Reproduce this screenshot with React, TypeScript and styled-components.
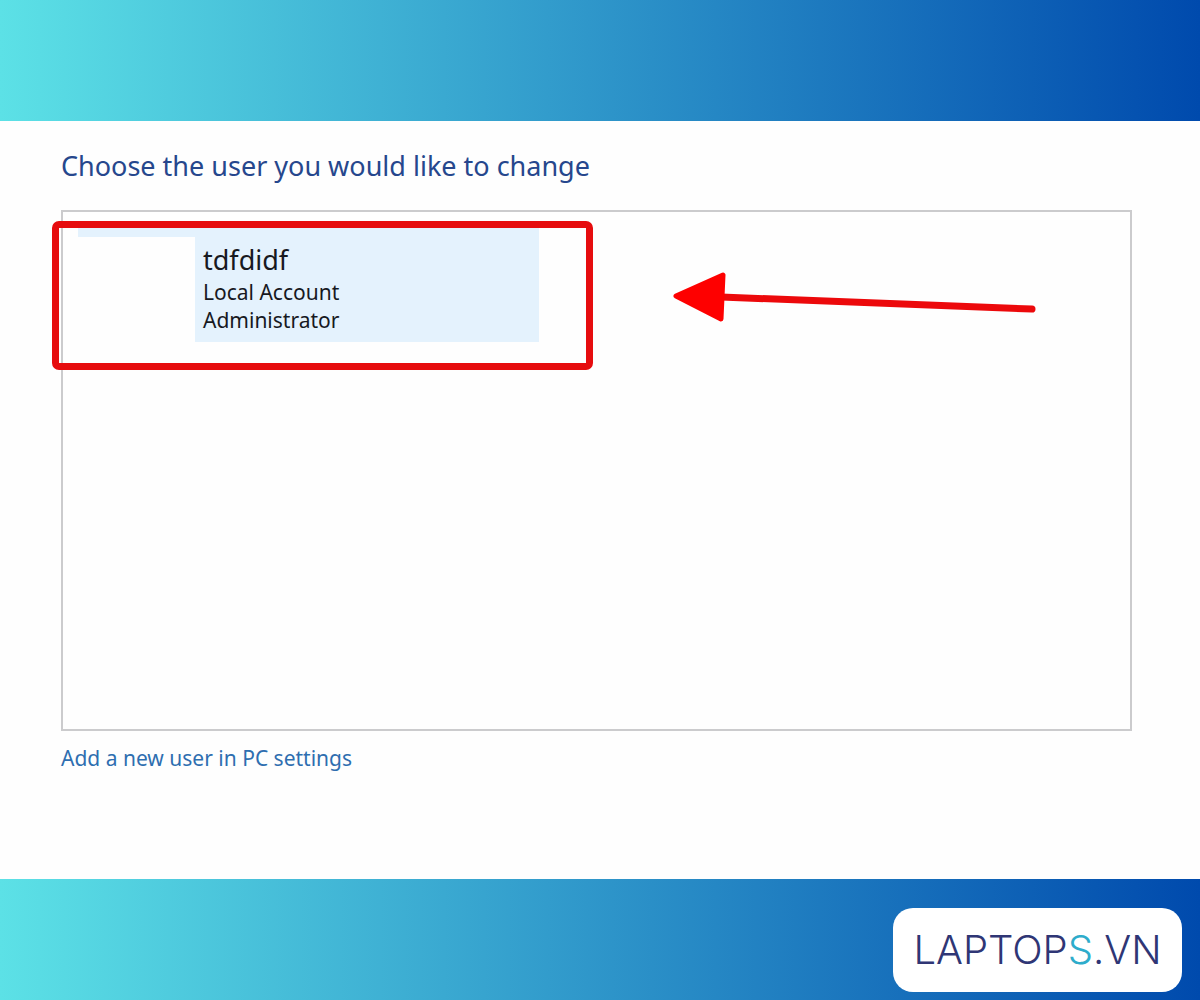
import React from "react";
import styled, { createGlobalStyle } from "styled-components";

const GlobalStyle = createGlobalStyle`
  * { box-sizing: border-box; }
  body { margin: 0; background: #fefefe; }
`;

const Page = styled.div`
  display: flex;
  flex-direction: column;
  min-height: 100vh;
  font-family: "Noto Sans", "Open Sans", sans-serif;
`;

const Band = styled.div`
  display: flex;
  justify-content: flex-end;
  align-items: flex-end;
  min-height: 121px;
  padding: 8px 18px;
  background: linear-gradient(to right, #5ce1e6, #004aad);
`;

const Main = styled.main`
  flex: 1;
  display: flex;
  flex-direction: column;
  align-items: flex-start;
  padding: 25px 68px 107px 61px;
`;

const Heading = styled.h1`
  margin: 0 0 24px;
  font-size: 27px;
  line-height: 40px;
  font-weight: 400;
  color: #26478d;
`;

const UserPanel = styled.section`
  position: relative;
  flex: 1;
  align-self: stretch;
  padding: 16px 15px;
  border: 2px solid #cbcbcd;
`;

const UserTile = styled.button`
  display: flex;
  width: 461px;
  max-width: 100%;
  padding: 9px 0 0;
  border: 0;
  background: #e4f2fd;
  color: #17191f;
  font-family: inherit;
  text-align: left;
`;

const Avatar = styled.span`
  flex: 0 0 117px;
  align-self: stretch;
  background: #fefefe;
`;

const Details = styled.span`
  display: flex;
  flex-direction: column;
  padding: 5px 8px 8px;
`;

const UserName = styled.span`
  font-size: 27px;
  line-height: 36px;
`;

const UserInfo = styled.span`
  font-size: 21px;
  line-height: 28px;
`;

const Highlight = styled.div`
  position: absolute;
  top: 9px;
  left: -11px;
  width: 541px;
  height: 149px;
  border: 7px solid #e60c0e;
  border-radius: 7px;
  pointer-events: none;
`;

const Arrow = styled.svg`
  position: absolute;
  top: 59px;
  left: 610px;
`;

const SettingsLink = styled.a`
  margin-top: 13px;
  font-size: 21px;
  line-height: 28px;
  color: #2e6eb0;
  text-decoration: none;
`;

const LogoCard = styled.div`
  display: flex;
  align-items: center;
  justify-content: center;
  width: 289px;
  height: 84px;
  border-radius: 20px;
  background: #ffffff;
`;

const Logo = styled.span`
  font-family: Inter, sans-serif;
  font-size: 40px;
  line-height: 48px;
  font-weight: 300;
  color: #2f3675;
`;

const LogoAccent = styled.span`
  color: #2eaccb;
`;

export default function App() {
  return (
    <Page>
      <GlobalStyle />
      <Band />
      <Main>
        <Heading>Choose the user you would like to change</Heading>
        <UserPanel>
          <UserTile type="button">
            <Avatar />
            <Details>
              <UserName>tdfdidf</UserName>
              <UserInfo>Local Account</UserInfo>
              <UserInfo>Administrator</UserInfo>
            </Details>
          </UserTile>
          <Highlight />
          <Arrow width="366" height="54" viewBox="0 0 366 54" aria-hidden="true">
            <path d="M48 26 L359 38" stroke="#ec090b" strokeWidth="7" strokeLinecap="round" />
            <path
              d="M3 25 L50 4 L48 48 Z"
              fill="#fe0000"
              stroke="#fe0000"
              strokeWidth="5"
              strokeLinejoin="round"
            />
          </Arrow>
        </UserPanel>
        <SettingsLink href="#settings">Add a new user in PC settings</SettingsLink>
      </Main>
      <Band>
        <LogoCard>
          <Logo>
            LAPTOP<LogoAccent>S</LogoAccent>.VN
          </Logo>
        </LogoCard>
      </Band>
    </Page>
  );
}
